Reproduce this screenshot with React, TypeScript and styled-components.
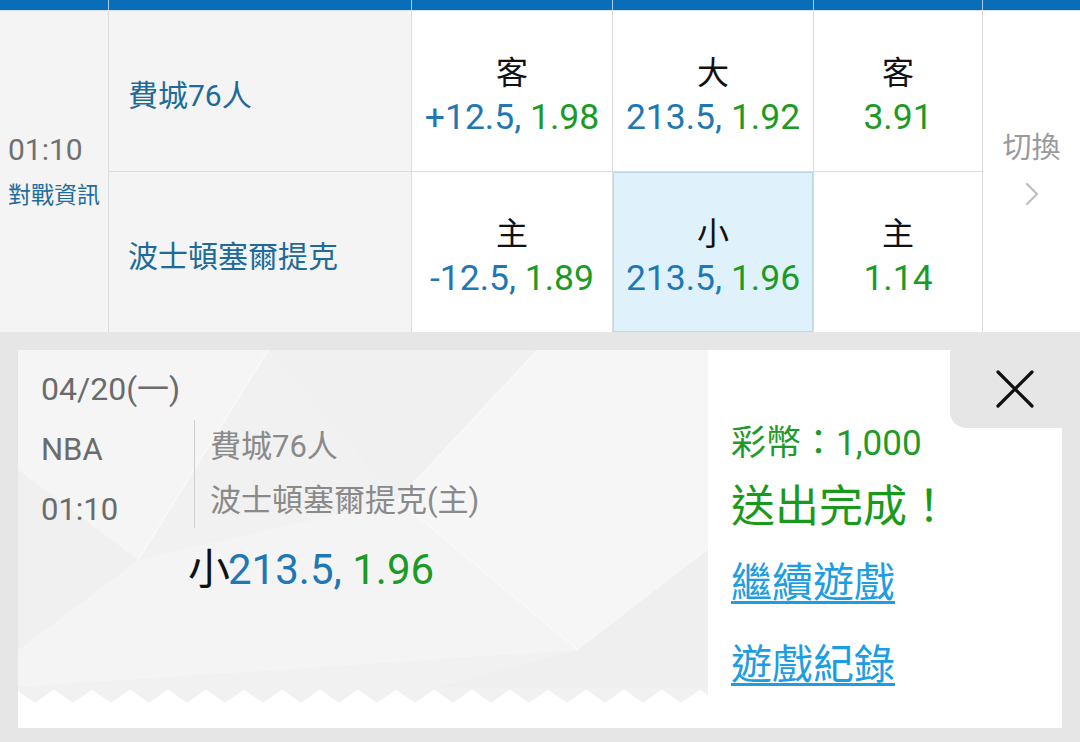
import React from "react"
import styled, { createGlobalStyle } from "styled-components"

const GlobalStyle = createGlobalStyle`
  html, body {
    margin: 0;
    padding: 0;
    background: #e6e6e6;
  }
  body {
    font-family: Roboto, "Noto Sans CJK TC", sans-serif;
  }
`

const BLUE = "#1f78b4"
const GREEN = "#1c9a26"

const odds = [
  { label: "客", line: "+12.5,", price: "1.98" },
  { label: "大", line: "213.5,", price: "1.92" },
  { label: "客", line: "", price: "3.91" },
  { label: "主", line: "-12.5,", price: "1.89" },
  { label: "小", line: "213.5,", price: "1.96", picked: true },
  { label: "主", line: "", price: "1.14" },
]

const App = () => {
  return (
    <Page>
      <GlobalStyle />
      <TopBar>
        <BarSeg />
        <BarSeg />
        <BarSeg />
        <BarSeg />
        <BarSeg />
        <BarSeg />
      </TopBar>
      <Board>
        <TimeCell>
          <Time>01:10</Time>
          <InfoLink>對戰資訊</InfoLink>
        </TimeCell>
        <TeamCell>費城76人</TeamCell>
        {odds.slice(0, 3).map((o, i) => (
          <OddsCell key={i} $picked={o.picked}>
            <Label>{o.label}</Label>
            <Value>
              {o.line && <Line>{o.line} </Line>}
              <Price>{o.price}</Price>
            </Value>
          </OddsCell>
        ))}
        <SwitchCell>
          <SwitchText>切換</SwitchText>
          <svg width="16" height="26" viewBox="0 0 16 26">
            <path d="M3 3 L13 13 L3 23" fill="none" stroke="#bdbdbd" strokeWidth="2.2" strokeLinecap="round" strokeLinejoin="round" />
          </svg>
        </SwitchCell>
        <TeamCell>波士頓塞爾提克</TeamCell>
        {odds.slice(3).map((o, i) => (
          <OddsCell key={i} $picked={o.picked}>
            <Label>{o.label}</Label>
            <Value>
              {o.line && <Line>{o.line} </Line>}
              <Price>{o.price}</Price>
            </Value>
          </OddsCell>
        ))}
      </Board>
      <Section>
        <Card>
          <Ticket>
            <Backdrop viewBox="0 0 690 337" preserveAspectRatio="none">
              <polygon points="0,0 250,0 120,210 0,120" fill="#f5f5f5" />
              <polygon points="250,0 520,0 380,150" fill="#f0f0f0" />
              <polygon points="120,210 380,150 560,300 0,337 0,300" fill="#f4f4f4" />
              <polygon points="520,0 690,0 690,200 560,300 380,150" fill="#f6f6f6" />
              <polygon points="0,120 120,210 0,300" fill="#f0f0f0" />
              <polygon points="560,300 690,200 690,337 420,337" fill="#efefef" />
              <line x1="250" y1="0" x2="120" y2="210" stroke="#f8f8f8" strokeWidth="2" />
              <line x1="380" y1="150" x2="560" y2="300" stroke="#f8f8f8" strokeWidth="2" />
              <line x1="520" y1="0" x2="380" y2="150" stroke="#f8f8f8" strokeWidth="2" />
            </Backdrop>
            <TicketBody>
              <DateLine>04/20(一)</DateLine>
              <InfoRow>
                <MetaCol>
                  <Meta>NBA</Meta>
                  <Meta>01:10</Meta>
                </MetaCol>
                <TeamsCol>
                  <TeamName>費城76人</TeamName>
                  <TeamName>波士頓塞爾提克(主)</TeamName>
                </TeamsCol>
              </InfoRow>
              <BetLine>
                <BetPick>小</BetPick>
                <Line>213.5, </Line>
                <Price>1.96</Price>
              </BetLine>
            </TicketBody>
            <TicketFoot>
              <svg width="100%" height="16" style={{ display: "block" }}>
                <defs>
                  <pattern id="zig" x="-2" y="0" width="38" height="16" patternUnits="userSpaceOnUse">
                    <path d="M-1 0 L19 14 L39 0 Z" fill="#f1f1f1" stroke="#f1f1f1" strokeWidth="3" strokeLinejoin="round" />
                  </pattern>
                </defs>
                <rect width="100%" height="16" fill="url(#zig)" />
              </svg>
            </TicketFoot>
          </Ticket>
          <Result>
            <Coins>彩幣：1,000</Coins>
            <Done>送出完成！</Done>
            <ActionLink href="#" $top={21}>繼續遊戲</ActionLink>
            <ActionLink href="#" $top={32}>遊戲紀錄</ActionLink>
          </Result>
          <CloseTab>
            <svg width="38" height="38" viewBox="0 0 38 38">
              <path d="M2 2 L36 36 M36 2 L2 36" stroke="#111" strokeWidth="3.2" strokeLinecap="round" />
            </svg>
          </CloseTab>
        </Card>
      </Section>
    </Page>
  )
}

export default App

const Page = styled.div`
width: 1080px;
height: 742px;
overflow: hidden;
background: #e6e6e6;
display: flex;
flex-direction: column;`

const TopBar = styled.div`
height: 10px;
display: grid;
grid-template-columns: 108px 302px 200px 200px 168px 1fr;
gap: 1px;
background: #a8cde9;
border-bottom: 1px solid #d6e4ef;`

const BarSeg = styled.div`
background: #0a6db8;`

const Board = styled.div`
display: grid;
grid-template-columns: 108px 302px 200px 200px 168px 1fr;
grid-template-rows: 160px 160px;
gap: 1px;
background: #d8dde2;`

const TimeCell = styled.div`
grid-row: span 2;
background: #f4f4f4;
padding: 121px 0 0 8px;
display: flex;
flex-direction: column;`

const Time = styled.div`
font-size: 30px;
line-height: 36px;
color: #707070;`

const InfoLink = styled.div`
margin-top: 12px;
font-size: 23px;
line-height: 32px;
color: #1e6d9c;
white-space: nowrap;`

const TeamCell = styled.div`
background: #f4f4f4;
padding: 4px 0 0 19px;
display: flex;
align-items: center;
font-size: 30px;
color: #1e6b99;`

const OddsCell = styled.div<{ $picked?: boolean }>`
background: ${p => (p.$picked ? "#dff2fb" : "#ffffff")};
box-shadow: ${p => (p.$picked ? "inset 0 0 0 1px #bcd9e8" : "none")};
padding-top: 7px;
display: flex;
flex-direction: column;
align-items: center;
justify-content: center;`

const Label = styled.div`
font-size: 32px;
line-height: 44px;
color: #111;`

const Value = styled.div`
font-size: 35.5px;
line-height: 44px;
white-space: nowrap;`

const Line = styled.span`
color: ${BLUE};
white-space: pre;`

const Price = styled.span`
color: ${GREEN};`

const SwitchCell = styled.div`
grid-row: span 2;
background: #ffffff;
display: flex;
flex-direction: column;
align-items: center;
justify-content: center;
padding-bottom: 9px;
gap: 13px;`

const SwitchText = styled.div`
font-size: 29px;
line-height: 40px;
color: #9a9a9a;`

const Section = styled.div`
flex: 1;
padding: 18px 18px 14px 18px;
display: flex;`

const Card = styled.div`
flex: 1;
position: relative;
display: flex;
background: #ffffff;`

const Ticket = styled.div`
width: 690px;
position: relative;
background: #f1f1f1;
display: flex;
flex-direction: column;`

const Backdrop = styled.svg`
position: absolute;
left: 0;
top: 0;
width: 100%;
height: 337px;`

const TicketBody = styled.div`
position: relative;
flex: 1;
padding: 19px 0 0 23px;`

const DateLine = styled.div`
font-size: 32px;
line-height: 40px;
color: #6b6b6b;`

const InfoRow = styled.div`
margin-top: 11px;
display: flex;
align-items: flex-start;`

const MetaCol = styled.div`
width: 153px;`

const Meta = styled.div`
font-size: 31px;
line-height: 60px;
color: #6b6b6b;`

const TeamsCol = styled.div`
border-left: 1px solid #cfcfcf;
padding-left: 15px;`

const TeamName = styled.div`
font-size: 31px;
line-height: 54px;
color: #8a8a8a;`

const BetLine = styled.div`
margin: 6px 0 0 147px;
font-size: 42px;
line-height: 48px;`

const BetPick = styled.span`
color: #111;
margin-right: -2px;`

const TicketFoot = styled.div`
position: relative;
height: 41px;
background: #ffffff;`

const Result = styled.div`
flex: 1;
background: #ffffff;
padding: 72px 0 0 23px;
display: flex;
flex-direction: column;
align-items: flex-start;`

const Coins = styled.div`
font-size: 35px;
line-height: 44px;
color: #1e9a2a;`

const Done = styled.div`
margin-top: 11px;
font-size: 44px;
line-height: 60px;
color: #1a9a1c;`

const ActionLink = styled.a<{ $top: number }>`
margin-top: ${p => p.$top}px;
font-size: 41px;
line-height: 50px;
color: #1d9de2;
text-decoration: underline;
text-decoration-thickness: 3px;
text-underline-offset: 4px;`

const CloseTab = styled.div`
position: absolute;
top: 0;
right: 0;
width: 112px;
height: 78px;
background: #e6e6e6;
border-bottom-left-radius: 16px;
display: flex;
align-items: center;
justify-content: center;
padding-left: 18px;
box-sizing: border-box;`
